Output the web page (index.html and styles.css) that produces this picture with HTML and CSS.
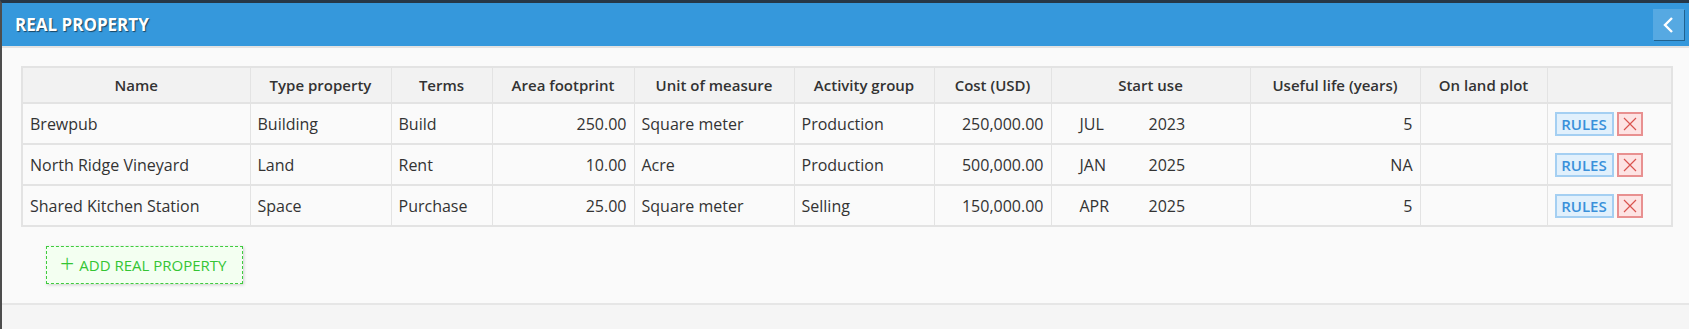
FILE: index.html
```html
<!DOCTYPE html>
<html lang="en">
<head>
    <meta charset="UTF-8">
    <title>Real Property</title>
    <link rel="stylesheet" href="styles.css">
</head>
<body>

    <div class="frame">
        <div class="panel-head">
            <h2>REAL PROPERTY</h2>
            <button class="back-btn">
                <svg width="14" height="18" viewBox="0 0 14 18"><polyline points="10,2 3,9 10,16" fill="none" stroke="#fff" stroke-width="2.4"/></svg>
            </button>
        </div>

        <div class="panel-body">
            <table class="grid">
                <colgroup>
                    <col style="width:228px"><col style="width:141px"><col style="width:101px">
                    <col style="width:142px"><col style="width:160px"><col style="width:140px">
                    <col style="width:117px"><col style="width:199px"><col style="width:170px">
                    <col style="width:127px"><col style="width:125px">
                </colgroup>
                <thead>
                    <tr>
                        <th>Name</th>
                        <th>Type property</th>
                        <th>Terms</th>
                        <th>Area footprint</th>
                        <th>Unit of measure</th>
                        <th>Activity group</th>
                        <th>Cost (USD)</th>
                        <th>Start use</th>
                        <th>Useful life (years)</th>
                        <th>On land plot</th>
                        <th></th>
                    </tr>
                </thead>
                <tbody>
                    <tr>
                        <td>Brewpub</td>
                        <td>Building</td>
                        <td>Build</td>
                        <td class="num">250.00</td>
                        <td>Square meter</td>
                        <td>Production</td>
                        <td class="num">250,000.00</td>
                        <td><div class="date"><span class="month">JUL</span><span>2023</span></div></td>
                        <td class="num">5</td>
                        <td></td>
                        <td class="actions"><button class="rules-btn">RULES</button><button class="del-btn"><svg width="14" height="14" viewBox="0 0 14 14"><path d="M1 1L13 13M13 1L1 13" stroke="#d9534f" stroke-width="1.2"/></svg></button></td>
                    </tr>
                    <tr>
                        <td>North Ridge Vineyard</td>
                        <td>Land</td>
                        <td>Rent</td>
                        <td class="num">10.00</td>
                        <td>Acre</td>
                        <td>Production</td>
                        <td class="num">500,000.00</td>
                        <td><div class="date"><span class="month">JAN</span><span>2025</span></div></td>
                        <td class="num">NA</td>
                        <td></td>
                        <td class="actions"><button class="rules-btn">RULES</button><button class="del-btn"><svg width="14" height="14" viewBox="0 0 14 14"><path d="M1 1L13 13M13 1L1 13" stroke="#d9534f" stroke-width="1.2"/></svg></button></td>
                    </tr>
                    <tr>
                        <td>Shared Kitchen Station</td>
                        <td>Space</td>
                        <td>Purchase</td>
                        <td class="num">25.00</td>
                        <td>Square meter</td>
                        <td>Selling</td>
                        <td class="num">150,000.00</td>
                        <td><div class="date"><span class="month">APR</span><span>2025</span></div></td>
                        <td class="num">5</td>
                        <td></td>
                        <td class="actions"><button class="rules-btn">RULES</button><button class="del-btn"><svg width="14" height="14" viewBox="0 0 14 14"><path d="M1 1L13 13M13 1L1 13" stroke="#d9534f" stroke-width="1.2"/></svg></button></td>
                    </tr>
                </tbody>
            </table>

            <button class="add-btn"><span class="plus">+</span> ADD REAL PROPERTY</button>
        </div>

        <div class="panel-foot"></div>
    </div>

</body>
</html>
```

FILE: styles.css
```css
* {
    margin: 0;
    padding: 0;
    box-sizing: border-box;
    font-family: 'Open Sans', 'Liberation Sans', sans-serif;
}
body {
    background: #f5f5f5;
    color: #333;
}
.frame {
    border-top: 3px solid #263747;
    border-left: 2px solid #4d4d4d;
    height: 329px;
    background: #f5f5f5;
}
.panel-head {
    height: 43px;
    background: #3598dc;
    display: flex;
    align-items: center;
    justify-content: space-between;
    padding: 0 5px 0 13px;
}
.panel-head h2 {
    color: #fff;
    font-size: 17px;
    font-weight: 700;
    text-shadow: 1px 1px 1px rgba(0,0,0,0.55);
}
.back-btn {
    width: 31px;
    height: 31px;
    border: none;
    background: #56a9e2;
    display: flex;
    align-items: center;
    justify-content: center;
    filter: drop-shadow(1px 1px 0 rgba(0,0,0,0.35));
}
.panel-body {
    background: #fafafa;
    border-top: 2px solid #e2e2e2;
    border-bottom: 2px solid #e6e6e6;
    padding: 18px 18px 19px 19px;
}
.grid {
    width: 1650px;
    table-layout: fixed;
    border-collapse: collapse;
    border: 2px solid #e3e3e3;
}
.grid th {
    height: 36px;
    background: #f2f2f2;
    font-size: 15px;
    font-weight: 600;
    color: #333;
    border: 1px solid #e3e3e3;
    text-align: center;
}
.grid td {
    height: 41px;
    font-size: 16px;
    color: #333;
    border-left: 1px solid #e3e3e3;
    border-right: 1px solid #e3e3e3;
    border-top: 2px solid #e3e3e3;
    padding: 0 7px;
    white-space: nowrap;
}
.grid td.num {
    text-align: right;
}
.date {
    display: flex;
    padding-left: 21px;
}
.date .month {
    width: 69px;
}
.actions {
    font-size: 0;
}
.rules-btn {
    height: 24px;
    width: 59px;
    background: #e1f0fc;
    border: 2px solid #a4cff2;
    color: #3a90da;
    font-size: 15px;
    font-weight: 600;
    vertical-align: middle;
}
.del-btn {
    width: 26px;
    height: 24px;
    margin-left: 3px;
    background: #fde3e3;
    border: 2px solid #e89090;
    vertical-align: middle;
    display: inline-flex;
    align-items: center;
    justify-content: center;
}
.add-btn {
    margin: 19px 0 0 25px;
    width: 197px;
    height: 38px;
    background: #f3fff1;
    border: 1px dashed #3fcb3f;
    box-shadow: 1px 1px 3px rgba(0,0,0,0.18);
    color: #34c534;
    font-size: 15px;
    display: flex;
    align-items: center;
    padding-left: 13px;
    white-space: nowrap;
}
.add-btn .plus {
    font-size: 25px;
    font-weight: 300;
    line-height: 1;
    margin-right: 5px;
    margin-top: -3px;
}
.panel-foot {
    background: #f5f5f5;
}
```
